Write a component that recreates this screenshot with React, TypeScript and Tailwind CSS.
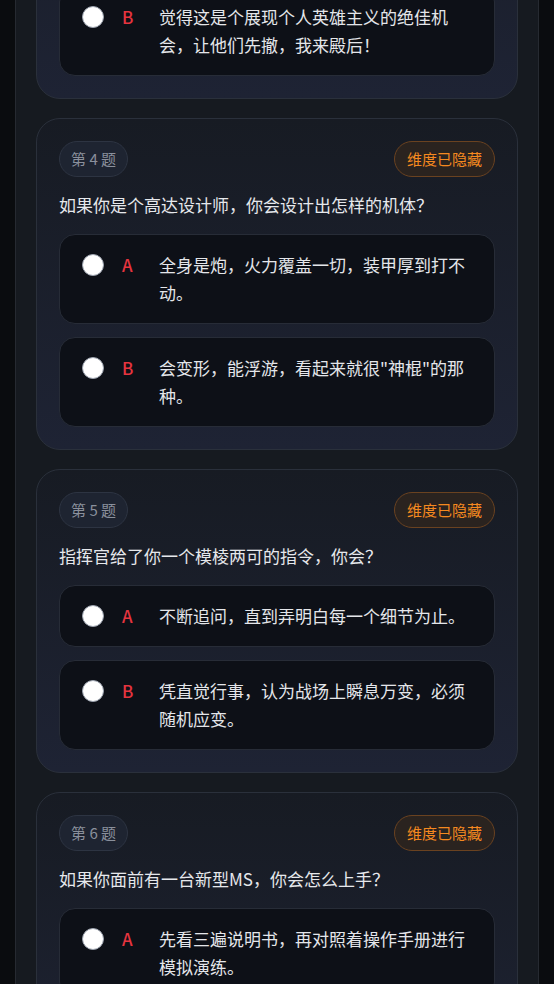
const questions = [
  {
    no: 3,
    title: "遇到敌军伏击，小队陷入困境，你会怎么做？",
    options: [
      { key: "A", text: "冷静分析局势，寻找最安全的撤退路线带大家离开。" },
      { key: "B", text: "觉得这是个展现个人英雄主义的绝佳机会，让他们先撤，我来殿后！" },
    ],
  },
  {
    no: 4,
    title: "如果你是个高达设计师，你会设计出怎样的机体？",
    options: [
      { key: "A", text: "全身是炮，火力覆盖一切，装甲厚到打不动。" },
      { key: "B", text: "会变形，能浮游，看起来就很\"神棍\"的那种。" },
    ],
  },
  {
    no: 5,
    title: "指挥官给了你一个模棱两可的指令，你会？",
    options: [
      { key: "A", text: "不断追问，直到弄明白每一个细节为止。" },
      { key: "B", text: "凭直觉行事，认为战场上瞬息万变，必须随机应变。" },
    ],
  },
  {
    no: 6,
    title: "如果你面前有一台新型MS，你会怎么上手？",
    options: [
      { key: "A", text: "先看三遍说明书，再对照着操作手册进行模拟演练。" },
      { key: "B", text: "直接坐进驾驶舱，边开边摸索。" },
    ],
  },
]

function OptionRow({ letter, text }: { letter: string; text: string }) {
  return (
    <label className="flex items-start rounded-2xl border border-[#272c37] bg-[#0d1017] py-4 pl-[22px] pr-4">
      <span className="mt-[3px] h-[22px] w-[22px] shrink-0 rounded-full border border-[#9ca3af] bg-white" />
      <span className="ml-[18px] w-[37px] shrink-0 text-[17px] font-medium leading-7 text-[#e5343f]">
        {letter}
      </span>
      <span className="text-[17px] leading-7 text-[#e4e6ea]">{text}</span>
    </label>
  )
}

export default function App() {
  return (
    <div
      className="min-h-screen overflow-hidden bg-[#0a0c0f]"
      style={{ fontFamily: '"Noto Sans CJK SC", "Noto Sans", sans-serif' }}
    >
      <div className="mx-[15px] min-h-screen border-x border-[#262a31] bg-[#161a20] px-5">
        <div className="-mt-[233px] flex flex-col gap-[19px] pb-10">
          {questions.map((q) => (
            <div
              key={q.no}
              className="rounded-3xl border border-[#2a303b] bg-gradient-to-b from-[#171b23] to-[#1e2334] p-[22px]"
            >
              <div className="flex items-center justify-between">
                <span className="flex h-9 items-center rounded-full border border-[#2d3442] bg-[#1e2431] px-[11px] text-[15px] text-[#8a909c]">
                  第 {q.no} 题
                </span>
                <span className="flex h-9 items-center rounded-full border border-[#6a4220] bg-[#2a231f] px-3 text-[15px] text-[#f5891f]">
                  维度已隐藏
                </span>
              </div>
              <p className="mt-[14px] text-[17px] leading-7 text-[#e6e8ec]">{q.title}</p>
              <div className="mt-[15px] flex flex-col gap-[13px]">
                {q.options.map((o) => (
                  <OptionRow key={o.key} letter={o.key} text={o.text} />
                ))}
              </div>
            </div>
          ))}
        </div>
      </div>
    </div>
  )
}
